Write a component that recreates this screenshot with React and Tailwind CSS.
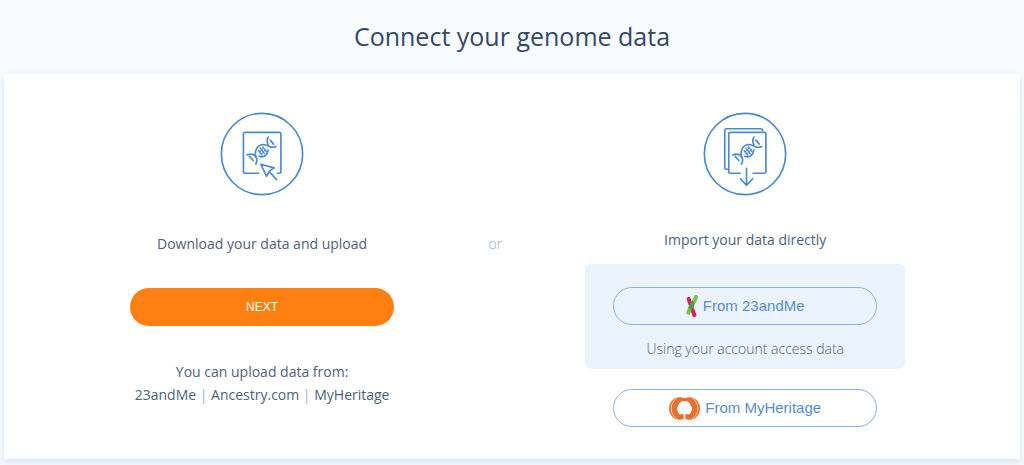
import React from "react";

const uploadSources = ["23andMe", "Ancestry.com", "MyHeritage"];

const DnaStrand = () => (
  <g>
    <path d="M107 150 C118 146 129 148 134 157 C138 164 136 172 133 178" />
    <path d="M133 157 C128 136 138 120 155 119 C172 119 178 134 193 125" />
    <path d="M143 154 C156 160 168 152 170 136" />
    <path d="M170 97 C166 104 166 112 170 120" />
    <path d="M176 106 L186 118 M114 154 L125 167" strokeWidth="5" />
    <path d="M146 129 L159 147 M154 126 L165 141 M141 137 L151 151" strokeWidth="4" />
    <path d="M144 141 L156 129 M149 148 L163 134" strokeWidth="3" />
  </g>
);

const UploadIcon = () => (
  <svg className="size-21" viewBox="26 22 251 251" fill="none" stroke="#4a89d3" strokeWidth="5" strokeLinecap="round" strokeLinejoin="round" aria-hidden="true">
    <circle cx="151.500" cy="147.500" r="121.500" />
    <path d="M142 205 H101 Q96 205 96 200 V88 Q96 83 101 83 H203 Q208 83 208 88 V200 Q208 205 203 205 H198" />
    <DnaStrand />
    <path d="M148 178 L188 189 L174 198 L165 214 Z" />
    <path d="M175 202 L195 224" />
  </svg>
);

const ImportIcon = () => (
  <svg className="size-21" viewBox="26 22 251 251" fill="none" stroke="#4a89d3" strokeWidth="5" strokeLinecap="round" strokeLinejoin="round" aria-hidden="true">
    <circle cx="151.500" cy="147.500" r="121.500" />
    <path d="M100 193 H96 Q91 193 91 188 V77 Q91 72 96 72 H198 Q204 72 204 78" />
    <path d="M137 205 H108 Q103 205 103 200 V88 Q103 83 108 83 H209 Q214 83 214 88 V200 Q214 205 209 205 H176" />
    <g transform="translate(8 0)">
      <DnaStrand />
    </g>
    <path d="M156 190 V240 M138 222 L156 241 L174 222" />
  </svg>
);

const TwentyThreeLogo = () => (
  <svg className="h-[22px] w-3" viewBox="0 0 36 66" fill="none" strokeLinecap="round" aria-hidden="true">
    <path d="M8 12 L25 60" stroke="#dc1f63" strokeWidth="12" />
    <path d="M30 6 C27 20 12 34 7 53" stroke="#7bc143" strokeWidth="12" />
    <path d="M20 25 L14 37" stroke="#3da449" strokeWidth="12" />
  </svg>
);

const MyHeritageLogo = () => (
  <svg className="h-[23px] w-[31px]" viewBox="0 0 93 69" aria-hidden="true">
    <ellipse cx="32" cy="34.500" rx="32" ry="34" fill="#e96f30" />
    <ellipse cx="61" cy="34.500" rx="32" ry="34" fill="#e96f30" />
    <path d="M23 4 C1 18 1 51 23 65 M70 4 C92 18 92 51 70 65" fill="none" stroke="#fbdccb" strokeWidth="2.500" />
    <path d="M44 50 C36 54 27 51 27 44 C22 38 23 29 28 26 C29 17 38 11 46.500 12 C55 11 64 17 65 26 C70 29 71 38 66 44 C66 51 57 54 49 50 V69 H44 Z" fill="#fff" />
  </svg>
);

const ImportButton = ({ icon, children }) => (
  <button
    type="button"
    className="flex h-[38px] w-full items-center justify-center gap-[5px] rounded-full border border-[#8ab3e4] font-['Liberation_Sans',sans-serif] text-[15px] text-[#5b8ccf] hover:bg-white"
  >
    {icon}
    {children}
  </button>
);

const App = () => {
  return (
    <div className="min-h-screen bg-[#f8fcff] px-1 pb-1 font-['Open_Sans','Noto_Sans',sans-serif] text-sm text-[#50607a]">
      <h1 className="pt-4 pb-[18px] text-center text-[25px] leading-10 text-[#34486a]">
        Connect your genome data
      </h1>

      <main className="grid grid-cols-[47.5%_1.5%_51%] bg-white px-8 pt-[38px] pb-8 shadow-[0_3px_8px_#d6dee7]">
        <section className="flex flex-col items-center text-center">
          <UploadIcon />
          <h2 className="mt-9 leading-6">Download your data and upload</h2>
          <button
            type="button"
            className="mt-8 h-[38px] w-66 rounded-full bg-[#ff7f11] font-['Liberation_Sans',sans-serif] text-xs text-white hover:bg-orange-600"
          >
            NEXT
          </button>
          <p className="mt-[34px] leading-[23px]">
            You can upload data from:
            <br />
            {uploadSources.map((source, index) => (
              <React.Fragment key={source}>
                {index > 0 && <span className="text-[#8fb0da]"> | </span>}
                {source}
              </React.Fragment>
            ))}
          </p>
        </section>

        <div className="flex justify-center pt-[120px] leading-6 font-light text-[#8fa9cc]">or</div>

        <section className="flex flex-col items-center text-center">
          <ImportIcon />
          <h2 className="mt-8 leading-6">Import your data directly</h2>
          <div className="mt-3 w-80 rounded-md bg-[#eaf3ff] px-7 pt-[23px] pb-2">
            <ImportButton icon={<TwentyThreeLogo />}>From 23andMe</ImportButton>
            <p className="mt-3 leading-6 font-light">Using your account access data</p>
          </div>
          <div className="mt-5 w-80 px-7">
            <ImportButton icon={<MyHeritageLogo />}>From MyHeritage</ImportButton>
          </div>
        </section>
      </main>
    </div>
  );
};

export default App;
